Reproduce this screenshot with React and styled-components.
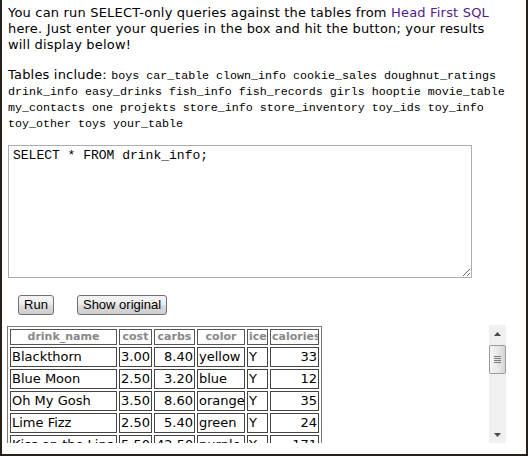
import React from 'react';
import styled, { createGlobalStyle } from 'styled-components';

const GlobalStyle = createGlobalStyle`
  body {
    margin: 0;
    background: #fff;
  }
`;

const Frame = styled.div`
  width: 528px;
  height: 456px;
  box-sizing: border-box;
  border: 2px solid #2b2019;
  border-top: none;
  padding: 5px 6px 0 6px;
  font-family: "DejaVu Sans", Verdana, sans-serif;
  font-size: 13px;
  line-height: 16px;
  color: #000;
  overflow: hidden;
`;

const Para = styled.p`
  margin: 0 0 14px 0;
  white-space: nowrap;
  letter-spacing: 0.19px;
`;

const BookLink = styled.a`
  color: #551a8b;
  text-decoration: none;
`;

const Code = styled.code`
  font-family: "Liberation Mono", "Courier New", monospace;
  font-size: 11.67px;
  line-height: 1;
  letter-spacing: 0;
`;

const QueryBox = styled.textarea`
  display: block;
  width: 464px;
  height: 133px;
  box-sizing: border-box;
  margin: 0;
  padding: 2px 4px;
  border: 1px solid #abadb3;
  font-family: "Liberation Mono", "Courier New", monospace;
  font-size: 13px;
  line-height: 15px;
  color: #000;
  resize: both;
  outline: none;
`;

const ButtonRow = styled.div`
  display: flex;
  gap: 23px;
  margin: 17px 0 0 10px;
`;

const Button = styled.button`
  height: 20px;
  width: ${p => p.$w}px;
  padding: 0;
  box-sizing: border-box;
  border: 1px solid #707070;
  border-radius: 3px;
  background: linear-gradient(#f4f4f4 0%, #ececec 46%, #dcdcdc 54%, #cdcdcd 100%);
  font-family: "Liberation Sans", Arial, sans-serif;
  font-size: 13px;
  line-height: 18px;
  color: #000;
`;

const Results = styled.div`
  display: flex;
  margin: 10px 0 0 -1px;
  height: 118px;
`;

const Viewport = styled.div`
  width: 482px;
  height: 118px;
  padding-top: 1px;
  box-sizing: border-box;
  overflow: hidden;
`;

const Table = styled.table`
  table-layout: fixed;
  width: 315px;
  border: 1px solid #7a7a7a;
  border-spacing: 2px;
`;

const Head = styled.th`
  box-sizing: border-box;
  width: ${p => p.$w}px;
  border: 1px solid #555;
  padding: 0 1px;
  font-size: 11px;
  line-height: 14px;
  font-weight: bold;
  color: #888;
  text-align: center;
  white-space: nowrap;
  overflow: hidden;
`;

const Cell = styled.td`
  box-sizing: border-box;
  border: 1px solid #444;
  padding: 1px;
  font-size: 13px;
  line-height: 16px;
  text-align: ${p => (p.$num ? 'right' : 'left')};
  white-space: nowrap;
  overflow: hidden;
`;

const Scrollbar = styled.div`
  width: 17px;
  height: 118px;
  background: #f0f0f0;
  display: flex;
  flex-direction: column;
`;

const ArrowBox = styled.div`
  height: 17px;
  display: flex;
  align-items: center;
  justify-content: center;
`;

const Thumb = styled.div`
  margin-top: 3px;
  height: 29px;
  box-sizing: border-box;
  border: 1px solid #9c9c9c;
  border-radius: 2px;
  background: linear-gradient(90deg, #f4f4f4, #e6e6e6 60%, #d6d6d6);
  display: flex;
  align-items: center;
  justify-content: center;
`;

const Spacer = styled.div`
  flex: 1;
`;

const columns = [
  { key: 'drink_name', w: 107 },
  { key: 'cost', w: 33, num: true },
  { key: 'carbs', w: 41, num: true },
  { key: 'color', w: 48 },
  { key: 'ice', w: 21 },
  { key: 'calories', w: 49, num: true },
];

const drinks = [
  ['Blackthorn', '3.00', '8.40', 'yellow', 'Y', '33'],
  ['Blue Moon', '2.50', '3.20', 'blue', 'Y', '12'],
  ['Oh My Gosh', '3.50', '8.60', 'orange', 'Y', '35'],
  ['Lime Fizz', '2.50', '5.40', 'green', 'Y', '24'],
  ['Kiss on the Lips', '5.50', '42.50', 'purple', 'Y', '171'],
  ['Hot Gold', '3.20', '32.10', 'orange', 'N', '80'],
  ['Lone Tree', '3.60', '4.20', 'red', 'Y', '17'],
];

function Arrow({ down }) {
  return (
    <svg width="7" height="4" viewBox="0 0 7 4">
      <path d={down ? 'M0 0h7L3.5 4z' : 'M3.5 0L7 4H0z'} fill="#4a4a4a" />
    </svg>
  );
}

function App() {
  return (
    <Frame>
      <GlobalStyle />
      <Para>
        You can run SELECT-only queries against the tables from <BookLink href="#">Head First SQL</BookLink>
        <br />
        here. Just enter your queries in the box and hit the button; your results
        <br />
        will display below!
      </Para>
      <Para>
        Tables include: <Code>boys car_table clown_info cookie_sales doughnut_ratings</Code>
        <br />
        <Code>drink_info easy_drinks fish_info fish_records girls hooptie movie_table</Code>
        <br />
        <Code>my_contacts one projekts store_info store_inventory toy_ids toy_info</Code>
        <br />
        <Code>toy_other toys your_table</Code>
      </Para>
      <QueryBox defaultValue="SELECT * FROM drink_info;" spellCheck={false} />
      <ButtonRow>
        <Button $w={36}>Run</Button>
        <Button $w={90}>Show original</Button>
      </ButtonRow>
      <Results>
        <Viewport>
          <Table>
            <thead>
              <tr>
                {columns.map(c => (
                  <Head key={c.key} $w={c.w}>{c.key}</Head>
                ))}
              </tr>
            </thead>
            <tbody>
              {drinks.map(row => (
                <tr key={row[0]}>
                  {row.map((v, i) => (
                    <Cell key={i} $num={columns[i].num}>{v}</Cell>
                  ))}
                </tr>
              ))}
            </tbody>
          </Table>
        </Viewport>
        <Scrollbar>
          <ArrowBox><Arrow /></ArrowBox>
          <Thumb>
            <svg width="7" height="7" viewBox="0 0 7 7">
              <path d="M0 0.5h7M0 2.5h7M0 4.5h7M0 6.5h7" stroke="#7a7a7a" strokeWidth="1" />
            </svg>
          </Thumb>
          <Spacer />
          <ArrowBox><Arrow down /></ArrowBox>
        </Scrollbar>
      </Results>
    </Frame>
  );
}

export default App;
